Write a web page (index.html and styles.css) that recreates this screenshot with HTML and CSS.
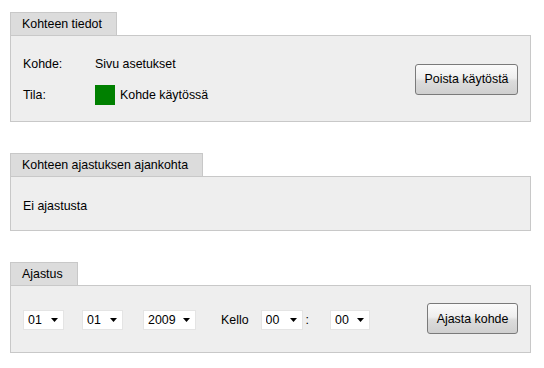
FILE: index.html
```html
<!DOCTYPE html>
<html lang="fi">
<head>
<meta charset="utf-8">
<title>Kohteen tiedot</title>
<link rel="stylesheet" href="styles.css">
</head>
<body>
<section class="section">
  <div class="tab">Kohteen tiedot</div>
  <div class="panel panel-info">
    <div class="info-grid">
      <div class="label">Kohde:</div>
      <div class="value">Sivu asetukset</div>
      <div class="label">Tila:</div>
      <div class="value"><span class="status-box"></span>Kohde käytössä</div>
    </div>
    <button class="btn btn-disable" type="button">Poista käytöstä</button>
  </div>
</section>

<section class="section">
  <div class="tab">Kohteen ajastuksen ajankohta</div>
  <div class="panel panel-time">Ei ajastusta</div>
</section>

<section class="section">
  <div class="tab">Ajastus</div>
  <div class="panel panel-schedule">
    <div class="fields">
      <span class="select-wrap w-day">
        <select class="select"><option>01</option></select>
        <svg class="arrow" width="7" height="4" viewBox="0 0 7 4"><polygon points="0,0 7,0 3.5,4" fill="#000"/></svg>
      </span>
      <span class="select-wrap w-month">
        <select class="select"><option>01</option></select>
        <svg class="arrow" width="7" height="4" viewBox="0 0 7 4"><polygon points="0,0 7,0 3.5,4" fill="#000"/></svg>
      </span>
      <span class="select-wrap w-year">
        <select class="select"><option>2009</option></select>
        <svg class="arrow" width="7" height="4" viewBox="0 0 7 4"><polygon points="0,0 7,0 3.5,4" fill="#000"/></svg>
      </span>
      <span class="kello">Kello</span>
      <span class="select-wrap w-hour">
        <select class="select"><option>00</option></select>
        <svg class="arrow" width="7" height="4" viewBox="0 0 7 4"><polygon points="0,0 7,0 3.5,4" fill="#000"/></svg>
      </span>
      <span class="colon">:</span>
      <span class="select-wrap w-min">
        <select class="select"><option>00</option></select>
        <svg class="arrow" width="7" height="4" viewBox="0 0 7 4"><polygon points="0,0 7,0 3.5,4" fill="#000"/></svg>
      </span>
    </div>
    <button class="btn btn-schedule" type="button">Ajasta kohde</button>
  </div>
</section>
</body>
</html>
```

FILE: styles.css
```css
* { box-sizing: border-box; }

html, body {
  margin: 0;
  background: #ffffff;
}

body {
  padding: 12px 0 0 10px;
  font-family: "Liberation Sans", Arial, sans-serif;
  font-size: 12.4px;
  color: #000;
}

.section {
  width: 521px;
  margin-bottom: 31px;
}

.tab {
  display: inline-block;
  vertical-align: top;
  height: 23px;
  line-height: 23px;
  padding: 0 14px 0 11px;
  background: #dcdcdc;
  border: 1px solid #c8c8c8;
  border-bottom: none;
}

.panel {
  display: block;
  background: #eeeeee;
  border: 1px solid #c8c8c8;
}

.panel-info {
  display: flex;
  align-items: center;
  padding: 12px 12px 11px 12px;
}

.info-grid {
  display: grid;
  grid-template-columns: 72px auto;
  grid-auto-rows: 31px;
  align-items: center;
}

.value {
  display: flex;
  align-items: center;
}

.status-box {
  display: inline-block;
  width: 20px;
  height: 20px;
  background: #008000;
  margin-right: 5px;
}

.btn {
  height: 31px;
  margin-left: auto;
  padding: 0;
  font-family: "Liberation Sans", Arial, sans-serif;
  font-size: 12.4px;
  color: #000;
  background: linear-gradient(#fbfbfb 0%, #eeeeee 45%, #dcdcdc 55%, #cfcfcf 100%);
  border: 1px solid #7a7a7a;
  border-radius: 3px;
  text-align: center;
}

.btn-disable { width: 103px; }
.btn-schedule { width: 91px; }

.panel-time {
  padding: 14px 12px 8px 12px;
  line-height: 31px;
}

.panel-schedule {
  display: flex;
  align-items: flex-start;
  padding: 17px 12px 18px 12px;
}

.fields {
  display: flex;
  align-items: center;
  margin-top: 7px;
  height: 20px;
}

.select-wrap {
  position: relative;
  display: inline-block;
  height: 20px;
}

.select {
  -webkit-appearance: none;
  appearance: none;
  width: 100%;
  height: 20px;
  margin: 0;
  padding: 0 0 0 4px;
  font-family: "Liberation Sans", Arial, sans-serif;
  font-size: 12.4px;
  color: #000;
  background: #ffffff;
  border: 1px solid #e4e4e4;
  border-radius: 0;
  outline: none;
}

.arrow {
  position: absolute;
  right: 6px;
  top: 8px;
  pointer-events: none;
}

.w-day { width: 41px; margin-right: 18px; }
.w-month { width: 41px; margin-right: 20px; }
.w-year { width: 53px; margin-right: 25px; }
.kello { margin-right: 12px; }
.w-hour { width: 42px; margin-right: 3px; }
.colon { margin-right: 21px; }
.w-min { width: 40px; }
```
